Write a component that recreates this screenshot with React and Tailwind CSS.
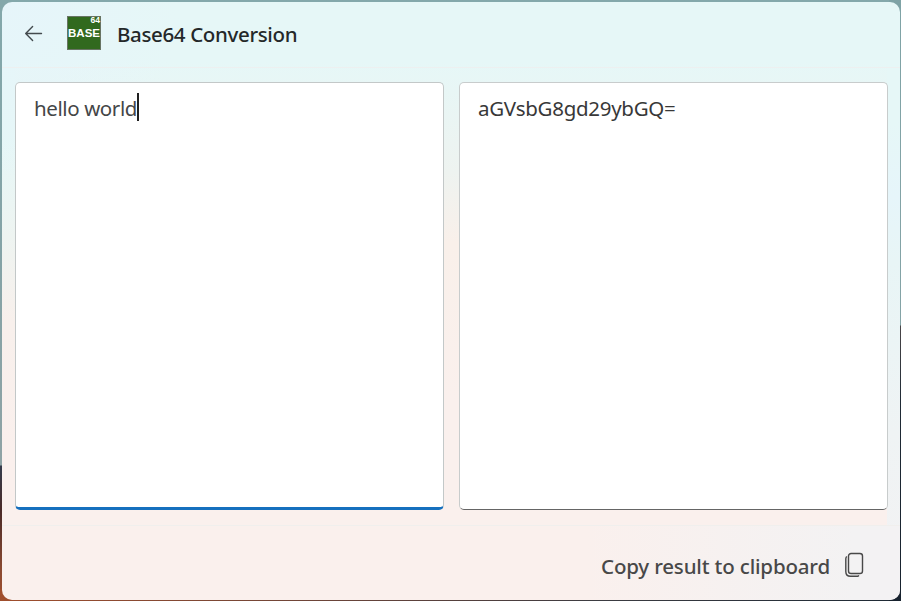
import React from "react";

function BackIcon() {
  return (
    <svg className="ml-[21px] h-[20px] w-[20px]" viewBox="0 0 20 20" fill="none" stroke="#444b4e" strokeWidth="1.4" strokeLinecap="round" strokeLinejoin="round">
      <path d="M9.6 3.6 L2.7 10.5 L9.6 17.4 M3 10.5 H18.5" />
    </svg>
  );
}

function CopyIcon() {
  return (
    <svg className="-mt-[2px] ml-[15px] h-[26px] w-[20px]" viewBox="0 0 20 26" fill="none" stroke="#484848" strokeWidth="1.4" strokeLinecap="round">
      <rect x="3.5" y="1.5" width="14" height="20" rx="2.6" />
      <path d="M1.4 4.9 Q0.8 5.7 0.8 7 V19.5 Q0.8 24.3 5.5 24.3 H11.3 Q12.8 24.3 13.6 23.8" />
    </svg>
  );
}

export default function App() {
  return (
    <div className="flex h-[601px] w-[901px] overflow-hidden bg-[linear-gradient(180deg,#7fa3a6_0px,#84a3a6_325px,#4a4648_326px,#202b36_400px,#17222e_601px),linear-gradient(90deg,#a04e2c_0px,#704538_300px,#3c3c42_600px,#202b36_880px),linear-gradient(180deg,#84a8ab_0px,#84a3a6_250px,#8fa3a5_465px,#343c4c_466px,#4a2a28_510px,#8b4a32_570px,#a04e2c_601px)] bg-[length:12px_601px,901px_12px,100%_100%] bg-[position:right_top,left_bottom,left_top] bg-no-repeat pl-[2px] pt-[2px] font-['Noto_Sans','Open_Sans',sans-serif]">
      <div className="flex h-[598px] w-[898px] flex-col rounded-[10px] bg-[radial-gradient(circle_at_0px_0px,#e6f5fa_0px,#e6f5fa00_180px),linear-gradient(180deg,#e6f7f7_0px,#e6f7f7_120px,#e6f5fa_195px,#e8f5f6_260px,#eff3f4_430px,#f3f2f3_598px),linear-gradient(180deg,#e6f7f7_0px,#e6f7f7_140px,#eef4f1_235px,#f8f0ec_320px,#faf0ed_450px,#faf0ed_598px),linear-gradient(180deg,#e6f7f7_0px,#e6f7f7_60px,#eef3f0_170px,#f9f0ea_240px,#faf0ed_400px,#faf0ed_508px,#faf0ed_598px)] bg-[length:100%_100%,13px_523px,13px_523px,100%_100%] bg-[position:left_top,right_top,left_top,left_top] bg-no-repeat">
        <header className="flex h-[66px] items-center border-b border-[#edf0f0] pb-[3px]">
          <BackIcon />
          <div className="ml-6 flex h-[34px] w-[34px] flex-col border border-[#687464] bg-[#31691e] font-['Liberation_Sans',sans-serif] font-bold text-white">
            <span className="h-[8px] text-right text-[8.5px] leading-[7px]">64</span>
            <span className="-mx-px text-center text-[11.5px] leading-[17px]">BASE</span>
          </div>
          <h1 className="ml-4 mt-[2px] text-[20.5px] font-medium tracking-[-0.35px] text-[#242829]">Base64 Conversion</h1>
        </header>
        <main className="flex h-[458px] gap-[15px] border-b border-[#f0efed] pl-[13px] pr-3 pt-[14px]">
          <div className="flex h-[428px] w-[429px] items-start rounded-[5px] border border-b-[3px] border-[#c3c8c8] border-b-[#1670be] bg-white pl-[18px] pt-[10px]">
            <span className="text-[20.5px] leading-[31px] tracking-[-0.4px] text-[#444647]">hello world</span>
            <span className="h-7 w-[2px] bg-[#202020]" />
          </div>
          <div className="flex h-[428px] w-[429px] items-start rounded-[5px] border border-[#c8cccc] border-b-[#656565] bg-white pl-[18px] pt-[10px]">
            <span className="text-[20.5px] leading-[31px] tracking-[-0.28px] text-[#383838]">aGVsbG8gd29ybGQ=</span>
          </div>
        </main>
        <footer className="flex flex-1 items-center justify-end rounded-b-[10px] bg-[linear-gradient(90deg,#f3f2f300_65%,#f3f2f3_95%)] pr-[35px] pt-[5px]">
          <span className="mt-[2px] text-[20.5px] font-medium tracking-[-0.17px] text-[#484848]">Copy result to clipboard</span>
          <CopyIcon />
        </footer>
      </div>
    </div>
  );
}
